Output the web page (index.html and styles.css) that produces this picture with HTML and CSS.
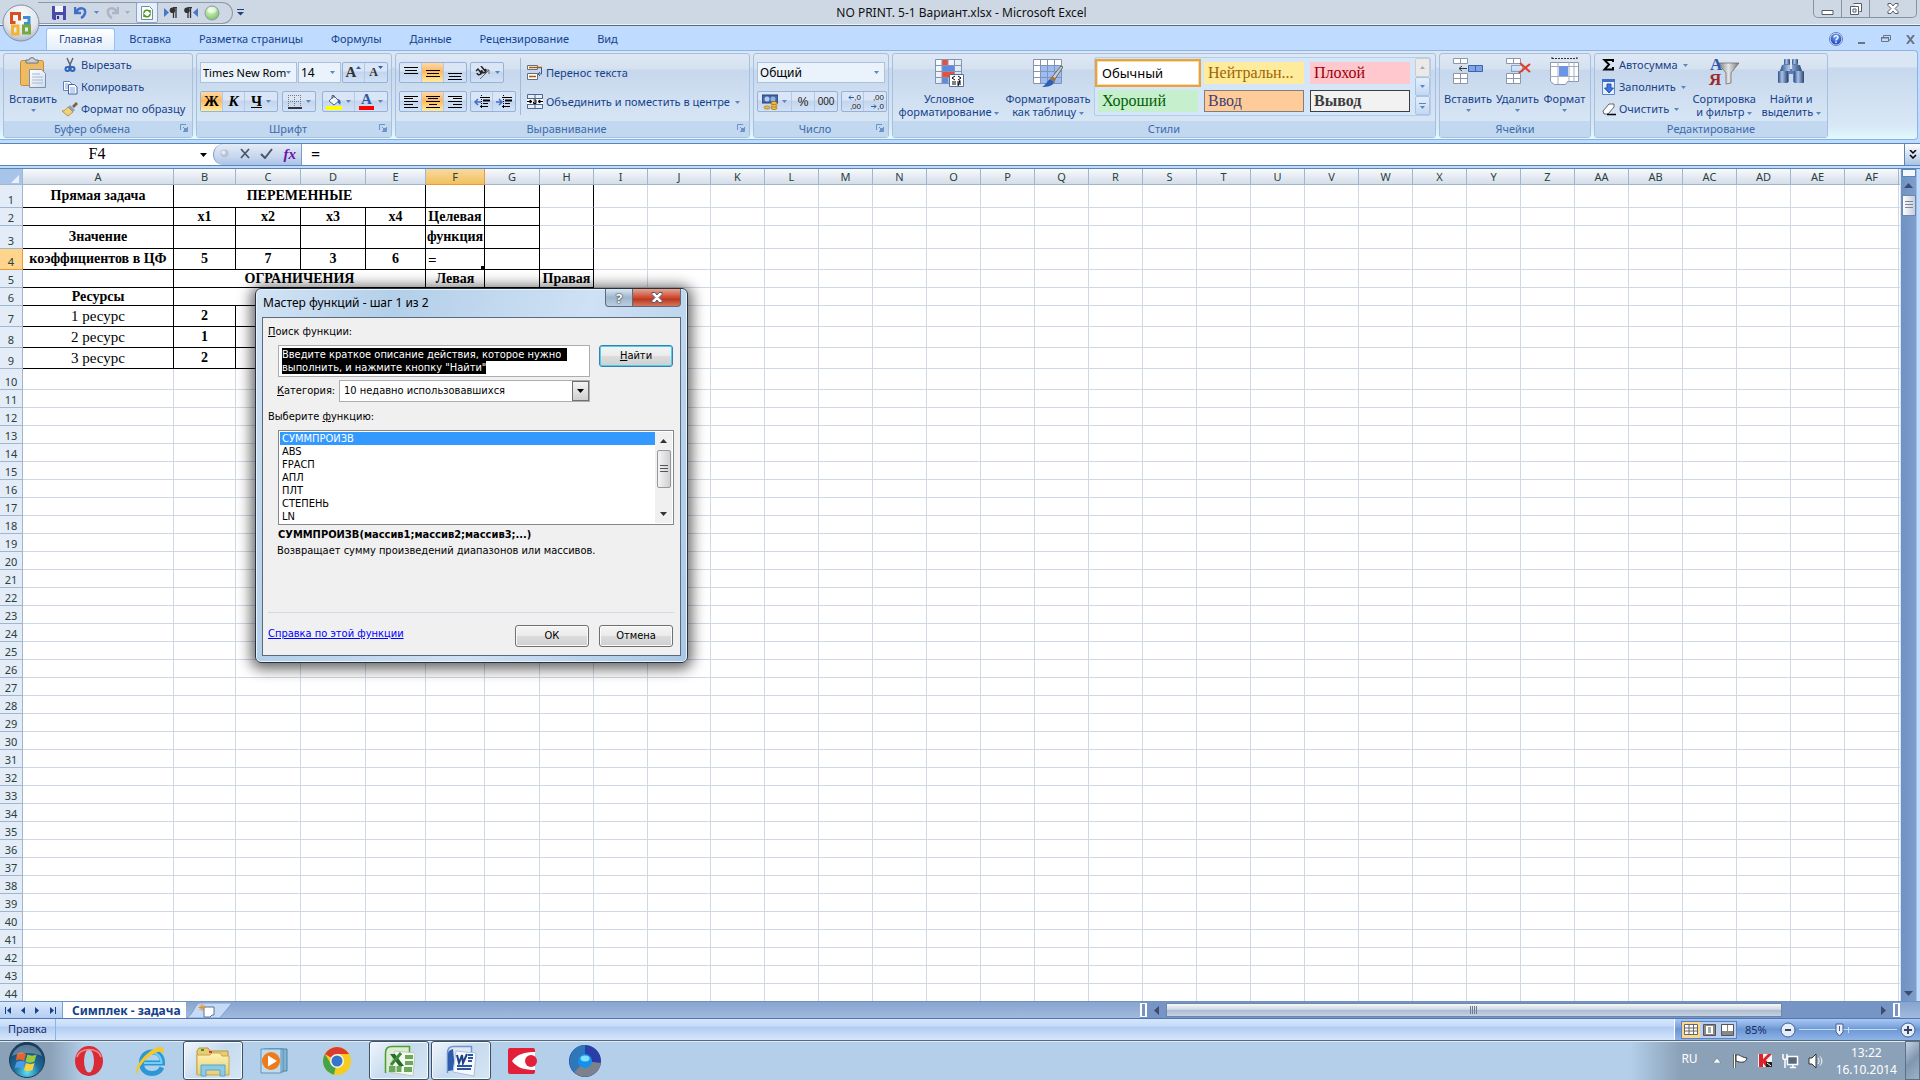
FILE: index.html
```html
<!DOCTYPE html>
<html lang="ru">
<head>
  <meta charset="UTF-8" />
  <meta name="viewport" content="width=device-width, initial-scale=1.0" />
  <title>NO PRINT. 5-1 Вариант.xlsx - Microsoft Excel</title>
  <link rel="stylesheet" href="styles.css">
</head>
<body>
  <svg class="defs" width="0" height="0">
    <defs>
      <linearGradient id="gPaper" x1="0" y1="0" x2="1" y2="1"><stop offset="0" stop-color="#fff"/><stop offset="1" stop-color="#cfdcee"/></linearGradient>
      <linearGradient id="gSteel" x1="0" y1="0" x2="1" y2="0"><stop offset="0" stop-color="#2f4f88"/><stop offset=".4" stop-color="#a9c3e6"/><stop offset="1" stop-color="#2b4473"/></linearGradient>
      <linearGradient id="gFunnel" x1="0" y1="0" x2="1" y2="0"><stop offset="0" stop-color="#777"/><stop offset=".5" stop-color="#e4e4e4"/><stop offset="1" stop-color="#777"/></linearGradient>
      <linearGradient id="gFolder" x1="0" y1="0" x2="0" y2="1"><stop offset="0" stop-color="#fdf3b4"/><stop offset="1" stop-color="#e8cf72"/></linearGradient>
      <radialGradient id="gOrb" cx=".5" cy=".85" r=".8"><stop offset="0" stop-color="#5fe0f5"/><stop offset=".45" stop-color="#1d6d9c"/><stop offset="1" stop-color="#173b5e"/></radialGradient>
      <radialGradient id="gOffice" cx=".5" cy=".3" r=".8"><stop offset="0" stop-color="#fff"/><stop offset=".6" stop-color="#dfe3ec"/><stop offset="1" stop-color="#9aa5bb"/></radialGradient>
      <radialGradient id="gGreen" cx=".4" cy=".3" r=".8"><stop offset="0" stop-color="#eaffdd"/><stop offset="1" stop-color="#6fb850"/></radialGradient>
      <radialGradient id="gHelp" cx=".5" cy=".3" r=".8"><stop offset="0" stop-color="#6fa4f4"/><stop offset="1" stop-color="#1238b4"/></radialGradient>
      <symbol id="launcher" viewBox="0 0 8 8"><path d="M.5 6V.5H6" fill="none" stroke="#6b93c6"/><path d="M3 3l3 3M7.500 3v4.500H3" fill="none" stroke="#6b93c6"/><path d="M4 4h3v3H4z" fill="#6b93c6"/></symbol>
      <symbol id="caret" viewBox="0 0 5 3"><path d="M0 0h5L2.500 3z" fill="#5c86bf"/></symbol>
    </defs>
  </svg>

  <div class="window">
    <header class="titlebar">
      <div class="qat">
        <button aria-label="Сохранить"><svg width="14" height="14"><path d="M0 0h14v14H1.500L0 12.500z" fill="#4a4aa8"/><path d="M3 0h8v6H3z" fill="#f2f4fb"/><path d="M4 9h7v5H4z" fill="#cfd3e8"/><path d="M5 10h2v3H5z" fill="#30307c"/></svg></button>
        <button class="undo" aria-label="Отменить"><svg width="14" height="13"><path d="M1 1v6h6M2 6c3-5 10-5 9 1-.4 2-2 4-4 5" fill="none" stroke="#3f6fc8" stroke-width="2.500"/></svg></button>
        <svg class="caret" width="5" height="3"><use href="#caret"/></svg>
        <button aria-label="Вернуть"><svg width="14" height="13"><path d="M13 1v6H7M12 6C9 1 2 1 3 7c.4 2 2 4 4 5" fill="none" stroke="#aab6c6" stroke-width="2.500"/></svg></button>
        <svg class="caret" width="5" height="3"><path d="M0 0h5L2.500 3z" fill="#a4adb9"/></svg>
        <button class="framed" aria-label="Обновить"><svg width="12" height="14"><path d="M.5.5h8l3 3v10H.5z" fill="#fff" stroke="#7c8aa0"/><path d="M3 7c0-3 4-4 6-1V4M9 8c0 3-4 4-6 1v2" fill="none" stroke="#4a9a22" stroke-width="1.500"/></svg></button>
        <button aria-label="Слева направо"><svg width="14" height="11"><path d="M0 1l5 4.500L0 10z" fill="#4a78c8"/><path d="M9.500 11V1M12 11V1M13 .7H9" stroke="#333" fill="none" stroke-width="1.300"/><circle cx="8.500" cy="3.200" r="2.800" fill="#333"/></svg></button>
        <button aria-label="Справа налево"><svg width="14" height="11"><path d="M14 1L9 5.500l5 4.500z" fill="#4a78c8"/><path d="M4 11V1M6.500 11V1M8 .7H3.500" stroke="#333" fill="none" stroke-width="1.300"/><circle cx="3" cy="3.200" r="2.800" fill="#333"/></svg></button>
        <button aria-label="Запись"><svg width="16" height="16"><circle cx="8" cy="8" r="7" fill="url(#gGreen)" stroke="#8d9bab"/><ellipse cx="8" cy="5" rx="4.500" ry="3" fill="#fff" opacity=".5"/></svg></button>
      </div>
      <button class="qat-more" aria-label="Настройка панели"><svg width="7" height="7"><path d="M0 .5h7" stroke="#23407a"/><path d="M0 3h7L3.500 6.500z" fill="#23407a"/></svg></button>
      <h1>NO PRINT. 5-1 Вариант.xlsx - Microsoft Excel</h1>
      <div class="win-buttons">
        <button aria-label="Свернуть"><svg width="13" height="14"><path d="M1 8.500h11v4H1z" fill="#fff" stroke="#555d6b"/></svg></button>
        <button aria-label="Окно"><svg width="12" height="13"><path d="M3.500 1.500h8v8h-2M.5 4.500h8v8h-8zM3 7h3v3H3z" fill="#fff" stroke="#555d6b"/></svg></button>
        <button class="wide" aria-label="Закрыть"><svg width="12" height="11"><path d="M1 .5h3L6 3 8 .5h3v2L8 5.500l3 3v2H8L6 8l-2 2.500H1v-2l3-3-3-3z" fill="#fff" stroke="#555d6b"/></svg></button>
      </div>
    </header>

    <button class="office" aria-label="Office"><svg width="40" height="40" viewBox="0 0 40 40">
      <circle cx="20" cy="20" r="18" fill="url(#gOffice)" stroke="#8490a6"/>
      <g fill="none" stroke-width="3"><path d="M18.500 17.500v-7h-8v9h4" stroke="#d9501e"/><path d="M22 14.500h6v6h-5" stroke="#3f8fd0"/><path d="M11.500 23h5.500v8h-5.500z" stroke="#f1b52f"/><path d="M22.500 23h6v7h-6z" stroke="#77a93c"/></g>
      <path d="M19 18h3v3h-3z" fill="#fff"/></svg></button>

    <nav class="tabs">
      <a href="#" class="active">Главная</a>
      <a href="#">Вставка</a>
      <a href="#">Разметка страницы</a>
      <a href="#">Формулы</a>
      <a href="#">Данные</a>
      <a href="#">Рецензирование</a>
      <a href="#">Вид</a>
      <div class="doc-buttons">
        <button aria-label="Справка"><svg width="14" height="14"><circle cx="7" cy="7" r="6.500" fill="#fff" stroke="#5b7dbb"/><circle cx="7" cy="7" r="5.500" fill="url(#gHelp)"/><path d="M5 5.500c0-2.500 4-2.500 4 0C9 7 7 6.800 7 8.500M7 9.500v1.500" fill="none" stroke="#fff" stroke-width="1.400"/></svg></button>
        <button aria-label="Свернуть книгу"><svg width="8" height="14"><path d="M0 11h7" stroke="#6b7480" stroke-width="2"/></svg></button>
        <button aria-label="Восстановить книгу"><svg width="10" height="8"><path d="M2.500 3V.5h7V5H8M.5 2.500h7v4h-7z" fill="none" stroke="#6b7480"/><path d="M0 2h8v1.500H0z" fill="#6b7480"/></svg></button>
        <button aria-label="Закрыть книгу"><svg width="9" height="9"><path d="M1 0l7 9M8 0L1 9" stroke="#6b7480" stroke-width="2"/></svg></button>
      </div>
    </nav>

    <div class="ribbon">
      <section class="group clipboard">
        <div class="group-body">
          <button class="big"><svg width="28" height="32"><rect x="1.500" y="3.500" width="23" height="25" rx="2" fill="#eebb62" stroke="#c58c34"/><path d="M7 6V3h3c0-3 6-3 6 0h3v3z" fill="#ccd0d6" stroke="#6d737c"/><path d="M10.500 12.500h12l4 4v14h-16z" fill="url(#gPaper)" stroke="#7d8fae"/><path d="M13 17h8M13 20h11M13 23h11M13 26h11" stroke="#a9b8d2"/></svg><span>Вставить</span><svg class="caret" width="5" height="3"><use href="#caret"/></svg></button>
          <div class="stack">
            <button class="small"><svg width="16" height="16"><path d="M5 1l4 9M11 1L7 10" stroke="#5b6679" stroke-width="1.500"/><g fill="none" stroke="#2f62bb" stroke-width="2"><circle cx="5.500" cy="12" r="2"/><circle cx="10.500" cy="12" r="2"/></g></svg>Вырезать</button>
            <button class="small"><svg width="16" height="16"><path d="M1.500 2.500h6l2 2v7h-8z" fill="#fff" stroke="#5f81bd"/><path d="M6.500 5.500h6l2.500 2.500v7h-8.500z" fill="#fff" stroke="#3967ad"/><path d="M3 5h3M3 7h3M3 9h3M8 9h5M8 11h5M8 13h5" stroke="#86a5d8"/></svg>Копировать</button>
            <button class="small"><svg width="16" height="16"><path d="M10 5l4-4 2 2-4 4z" fill="#7b6248"/><path d="M8 4l5 5-2 2-5-5z" fill="#8fa2c2"/><path d="M6 6l5 5-5 4-6-5c3 0 4-2 6-4z" fill="#f0d27a" stroke="#b89243"/></svg>Формат по образцу</button>
          </div>
        </div>
        <footer>Буфер обмена<svg width="8" height="8"><use href="#launcher"/></svg></footer>
      </section>

      <section class="group font">
        <div class="group-body rows">
          <div class="row">
            <span class="combo"><select class="font-name" aria-label="Шрифт"><option>Times New Rom</option></select><svg class="caret" width="5" height="3"><use href="#caret"/></svg></span>
            <span class="combo"><select class="font-size" aria-label="Размер шрифта"><option>14</option></select><svg class="caret" width="5" height="3"><use href="#caret"/></svg></span>
            <div class="btns push">
              <button class="serif" aria-label="Увеличить размер"><b class="a-big">A</b><svg class="tick" width="5" height="3"><path d="M0 3h5L2.500 0z" fill="#2f5ea8"/></svg></button>
              <button class="serif" aria-label="Уменьшить размер"><b class="a-small">A</b><svg class="tick" width="5" height="3"><path d="M0 0h5L2.500 3z" fill="#2f5ea8"/></svg></button>
            </div>
          </div>
          <div class="row">
            <div class="btns">
              <button class="serif on"><b>Ж</b></button>
              <button class="serif"><b><i>К</i></b></button>
              <button class="serif drop"><b><u>Ч</u></b><svg class="caret" width="5" height="3"><use href="#caret"/></svg></button>
            </div>
            <div class="btns">
              <button class="drop" aria-label="Границы"><svg width="14" height="14"><path d="M.5 0v12M6.500 0v12M12.500 0v12M0 .5h14M0 6.500h14" stroke="#777" stroke-dasharray="1 1"/><path d="M0 13h14" stroke="#000" stroke-width="1.500"/></svg><svg class="caret" width="5" height="3"><use href="#caret"/></svg></button>
            </div>
            <div class="btns push">
              <button class="drop" aria-label="Цвет заливки"><svg width="16" height="16"><path d="M3 7l5-5 5 5-5 4z" fill="#f2f5fa" stroke="#4f6486"/><path d="M6 5V1.500h2V4" fill="none" stroke="#4f6486"/><path d="M12 5c3 1 3 3 2 6-1-2-3-2-2-6z" fill="#2f62bb"/><path d="M0 12h16v4H0z" fill="#ff0"/></svg><svg class="caret" width="5" height="3"><use href="#caret"/></svg></button>
              <button class="serif drop" aria-label="Цвет текста"><b class="a-color">A</b><svg class="caret" width="5" height="3"><use href="#caret"/></svg></button>
            </div>
          </div>
        </div>
        <footer>Шрифт<svg width="8" height="8"><use href="#launcher"/></svg></footer>
      </section>

      <section class="group align">
        <div class="group-body rows">
          <div class="align-buttons">
            <div class="row">
              <div class="btns three">
                <button aria-label="По верхнему краю"><svg width="14" height="16"><path d="M0 2.500h14M1 5.500h12M0 8.500h14" stroke="#000" stroke-width="1"/></svg></button>
                <button class="on" aria-label="По середине"><svg width="14" height="16"><path d="M0 5.500h14M1 8.500h12M0 11.500h14" stroke="#000"/></svg></button>
                <button aria-label="По нижнему краю"><svg width="14" height="16"><path d="M0 8.500h14M1 11.500h12M0 14.500h14" stroke="#000"/></svg></button>
              </div>
              <div class="btns"><button class="drop" aria-label="Ориентация"><svg width="16" height="14"><path d="M5 13L14 4M14 8V4h-4" stroke="#666" fill="none"/><path d="M1 5l2-2 4 5M2 7a2 2 0 1 0 3-2M6 0l5 6M7 4a2 2 0 1 0 3-1" stroke="#222" fill="none" stroke-width="1.500"/></svg><svg class="caret" width="5" height="3"><use href="#caret"/></svg></button></div>
            </div>
            <div class="row">
              <div class="btns three">
                <button aria-label="По левому краю"><svg width="14" height="12"><path d="M0 .5h14M0 2.500h9M0 5.500h14M0 8.500h9M0 11.500h14" stroke="#000"/></svg></button>
                <button class="on" aria-label="По центру"><svg width="14" height="12"><path d="M0 .5h14M2 2.500h10M0 5.500h14M3 8.500h8M0 11.500h14" stroke="#000"/></svg></button>
                <button aria-label="По правому краю"><svg width="14" height="12"><path d="M0 .5h14M5 2.500h9M0 5.500h14M5 8.500h9M0 11.500h14" stroke="#000"/></svg></button>
              </div>
              <div class="btns">
                <button aria-label="Уменьшить отступ"><svg width="16" height="14"><path d="M7.500 0v14" stroke="#000" stroke-dasharray="1 1"/><path d="M6 2.500h10M9 8.500h5M6 11.500h8" stroke="#000"/><path d="M9 5.500h7" stroke="#000" stroke-width="2"/><path d="M7 7H2M4 4L1 7l3 3" stroke="#3f6fc8" fill="none" stroke-width="1.500"/></svg></button>
                <button aria-label="Увеличить отступ"><svg width="16" height="14"><path d="M7.500 0v14" stroke="#000" stroke-dasharray="1 1"/><path d="M6 2.500h10M9 8.500h5M6 11.500h8" stroke="#000"/><path d="M9 5.500h7" stroke="#000" stroke-width="2"/><path d="M0 7h5M3 4l3 3-3 3" stroke="#3f6fc8" fill="none" stroke-width="1.500"/></svg></button>
              </div>
            </div>
          </div>
          <div class="align-text">
            <button class="small"><svg width="16" height="16"><path d="M.5.500h10v4H.5zM.5 8.500h10v6H.5z" fill="#fff" stroke="#6a6f78"/><path d="M2 2.500h13M2 11.500h7" stroke="#a35b1a" stroke-width="1.500"/><path d="M14.500 3v6h-3M13 7l-2 2 2 2" fill="none" stroke="#3c5c8c"/></svg>Перенос текста</button>
            <button class="small"><svg width="16" height="16"><path d="M.5.500h15v14H.5zM.5 4.500h15M.5 10.500h15M8 0v5M8 10v5" fill="#e9eef6" stroke="#4b6796"/><path d="M0 5h16v5H0z" fill="#fff"/><path d="M0 7.500h4M12 7.500h4M3 6l2 1.500L3 9zM13 6l-2 1.500L13 9z" stroke="#000" fill="#000"/><path d="M6.500 6h2.500v3.500H6.500V8H9" fill="none" stroke="#000"/></svg>Объединить и поместить в центре<svg class="caret" width="5" height="3"><use href="#caret"/></svg></button>
          </div>
        </div>
        <footer>Выравнивание<svg width="8" height="8"><use href="#launcher"/></svg></footer>
      </section>

      <section class="group number">
        <div class="group-body rows">
          <div class="row"><span class="combo grow"><select aria-label="Числовой формат"><option>Общий</option></select><svg class="caret" width="5" height="3"><use href="#caret"/></svg></span></div>
          <div class="row">
            <div class="btns">
              <button class="drop" aria-label="Финансовый формат"><svg width="16" height="16"><path d="M0 1h16v8H0z" fill="#4668a8" stroke="#25427c"/><circle cx="5" cy="5" r="2.500" fill="#b5cbee"/><circle cx="11" cy="5" r="2.500" fill="#8fb0e0"/><g fill="#f1bd3c" stroke="#a0701a" stroke-width=".7"><ellipse cx="12" cy="14" rx="3" ry="1.600"/><ellipse cx="12" cy="11.500" rx="3" ry="1.600"/><ellipse cx="12" cy="9" rx="3" ry="1.600"/><ellipse cx="5" cy="13.500" rx="3" ry="1.600"/></g></svg><svg class="caret" width="5" height="3"><use href="#caret"/></svg></button>
              <button class="numeric">%</button>
              <button class="numeric zeros">000</button>
            </div>
            <div class="btns push">
              <button class="decimal" aria-label="Увеличить разрядность"><span><svg width="6" height="5"><path d="M6 2.500H1M3 .5l-2 2 2 2" fill="none" stroke="#2f5ea8"/></svg>,0</span><span>,00</span></button>
              <button class="decimal" aria-label="Уменьшить разрядность"><span>,00</span><span><svg width="6" height="5"><path d="M0 2.500h5M3 .5l2 2-2 2" fill="none" stroke="#2f5ea8"/></svg>,0</span></button>
            </div>
          </div>
        </div>
        <footer>Число<svg width="8" height="8"><use href="#launcher"/></svg></footer>
      </section>

      <section class="group styles">
        <div class="group-body">
          <button class="big cond"><svg width="30" height="30"><path d="M1.500 1.500h26v24h-26z" fill="url(#gPaper)" stroke="#8393b0"/><path d="M8 2h6v5H8z" fill="#e8503a"/><path d="M8 8h12v5H8z" fill="#5d8ae2"/><path d="M8 14h12v5H8z" fill="#e8503a"/><path d="M8 20h6v5H8z" fill="#5d8ae2"/><path d="M8 1v25M14 1v7M14 20v6M20.500 1v25M1 7.500h27M1 13.500h27M1 19.500h27" stroke="#8393b0" fill="none"/><path d="M15.500 16.500h14v12h-14z" fill="#fff" stroke="#55709c"/><path d="M21 18l-3 2 3 2M18 24h4M18 26h4M24 18l3 2-3 2M23 24h4M23 26h4M26 22l-2 6" stroke="#000" fill="none"/></svg><span>Условное<br>форматирование <svg class="caret" width="5" height="3"><use href="#caret"/></svg></span></button>
          <button class="big fmt-table"><svg width="30" height="30"><path d="M.5 1.500h28v24H.5z" fill="#fff" stroke="#8393b0"/><path d="M7 8h21v17H7z" fill="#9cbcf5"/><path d="M7.500 1v25M14.500 1v25M21.500 1v25M0 7.500h29M0 13.500h29M0 19.500h29" stroke="#8393b0"/><path d="M28 8l2 1-8 12-3-2z" fill="#c9ccd2" stroke="#666"/><path d="M19 18l4 3-2 3-4-3z" fill="#a9743a"/><path d="M17 21l4 3c-1 4-6 5-12 5 4-2 5-6 8-8z" fill="#2d5fb6"/></svg><span>Форматировать<br>как таблицу <svg class="caret" width="5" height="3"><use href="#caret"/></svg></span></button>
          <div class="gallery">
            <div class="swatches">
              <button class="normal">Обычный</button>
              <button class="neutral">Нейтральн...</button>
              <button class="bad">Плохой</button>
              <button class="good">Хороший</button>
              <button class="input">Ввод</button>
              <button class="output">Вывод</button>
            </div>
            <div class="gallery-scroll">
              <button class="off" aria-label="Вверх"><svg width="5" height="3"><path d="M0 3h5L2.500 0z" fill="#aaa"/></svg></button>
              <button aria-label="Вниз"><svg width="5" height="3"><use href="#caret"/></svg></button>
              <button aria-label="Все стили"><svg width="7" height="6"><path d="M0 .5h7" stroke="#5c86bf"/><path d="M1 3h5L3.500 6z" fill="#5c86bf"/></svg></button>
            </div>
          </div>
        </div>
        <footer>Стили</footer>
      </section>

      <section class="group cells">
        <div class="group-body">
          <button class="big"><svg width="32" height="32"><path d="M1.500 2.500h14v5h-14zM1.500 17.500h14v10h-14zM8.500 2v6M8.500 17v11M1 22.500h15" fill="#fff" stroke="#8c97ab"/><path d="M16.500 9.500h14v6h-14z" fill="#7ea3e8" stroke="#3f62a8"/><path d="M23.500 9v7" stroke="#3f62a8"/><path d="M8 12.500h7M10 10l-3 2.500 3 2.500" stroke="#333" fill="none"/></svg><span>Вставить</span><svg class="caret" width="5" height="3"><use href="#caret"/></svg></button>
          <button class="big"><svg width="32" height="32"><path d="M4.500 2.500h14v5h-14zM4.500 17.500h14v10h-14zM11.500 2v6M11.500 17v11M4 22.500h15" fill="#fff" stroke="#8c97ab"/><path d="M9.500 9.500h11v6h-11z" fill="none" stroke="#3f62a8" stroke-dasharray="1 1"/><path d="M18 7l10 9M28 8L17 17" stroke="#e03c28" stroke-width="2"/></svg><span>Удалить</span><svg class="caret" width="5" height="3"><use href="#caret"/></svg></button>
          <button class="big"><svg width="32" height="32"><path d="M3 1v3M28 1v3M3 2.500h25" stroke="#333" stroke-dasharray="2 1"/><path d="M1.500 6.500h28v19h-11l-2 3h-11l-4-3z" fill="#fff" stroke="#8c97ab"/><path d="M9 6v22M20 6v20M25 6v20M1 10.500h28M1 20.500h28" stroke="#a4aec0"/><path d="M10 10h9v10h-9z" fill="#6b95e6"/></svg><span>Формат</span><svg class="caret" width="5" height="3"><use href="#caret"/></svg></button>
        </div>
        <footer>Ячейки</footer>
      </section>

      <section class="group editing">
        <div class="group-body">
          <div class="stack">
            <button class="small"><svg width="14" height="16"><path d="M11 5V3H2.500L7 7.500 2.500 12.500H11V10" fill="none" stroke="#000" stroke-width="2"/></svg>Автосумма<svg class="caret" width="5" height="3"><use href="#caret"/></svg></button>
            <button class="small"><svg width="14" height="16"><path d="M.5.500h12v15H.5z" fill="#e8f0fc" stroke="#5b83c4"/><path d="M0 0h13v3H0z" fill="#3d6fc9"/><path d="M5 5h4v4h2.500L7 14 2.500 9H5z" fill="#3d76e0" stroke="#2554a8"/></svg>Заполнить<svg class="caret" width="5" height="3"><use href="#caret"/></svg></button>
            <button class="small"><svg width="14" height="16"><path d="M1 10l6-7h5v3l-6 7H2z" fill="#fff" stroke="#666"/><path d="M5 13.500h9" stroke="#000" stroke-width="1.500"/></svg>Очистить<svg class="caret" width="5" height="3"><use href="#caret"/></svg></button>
          </div>
          <button class="big sort"><svg width="32" height="32"><path d="M10 7h21l-8 10v10l-5 1V17z" fill="url(#gFunnel)" stroke="#666" stroke-width=".7"/><text x="2" y="14" class="glyph-a">А</text><text x="1" y="29" class="glyph-ya">Я</text></svg><span>Сортировка<br>и фильтр <svg class="caret" width="5" height="3"><use href="#caret"/></svg></span></button>
          <button class="big find"><svg width="30" height="32"><path d="M10 4h4v9h2V4h4l6 13v9H17v-8h-4v8H3v-9z" fill="#5b7cb4"/><rect x="8" y="3" width="6" height="5" rx="1" fill="url(#gSteel)"/><rect x="16" y="3" width="6" height="5" rx="1" fill="url(#gSteel)"/><path d="M6 9h8v6H4zM16 9h8l2 6H16z" fill="url(#gSteel)"/><rect x="2" y="15" width="10" height="12" rx="1" fill="url(#gSteel)"/><rect x="18" y="15" width="10" height="12" rx="1" fill="url(#gSteel)"/></svg><span>Найти и<br>выделить <svg class="caret" width="5" height="3"><use href="#caret"/></svg></span></button>
        </div>
        <footer>Редактирование</footer>
      </section>
    </div>

    <div class="formula-bar">
      <label class="name-box"><input type="text" value="F4" aria-label="Имя ячейки"><svg width="7" height="4"><path d="M0 0h7L3.500 4z" fill="#000"/></svg></label>
      <div class="fx">
        <svg width="9" height="9"><circle cx="4.500" cy="4.500" r="4" fill="#b9c3d4"/><circle cx="3.500" cy="3.500" r="2" fill="#e6ebf3"/></svg>
        <button aria-label="Отмена ввода"><svg width="10" height="11"><path d="M1 1l8 9M9 1L1 10" stroke="#4c5468" stroke-width="1.700"/></svg></button>
        <button aria-label="Ввод"><svg width="13" height="11"><path d="M1 6l4 4 7-9" fill="none" stroke="#4c5468" stroke-width="2"/></svg></button>
        <button class="fx-icon"><i>fx</i></button>
      </div>
      <input class="formula" type="text" value="=" aria-label="Строка формул">
      <button class="expand" aria-label="Развернуть"><svg width="8" height="9"><path d="M1 0l3 3 3-3M1 5l3 3 3-3" fill="none" stroke="#000" stroke-width="1.500"/></svg></button>
    </div>

    <main class="sheet">
      <div class="grid-wrap">
        <table class="grid" id="grid">
          <colgroup id="cols"></colgroup>
          <thead><tr id="letters"><th class="corner"><svg width="8" height="8"><path d="M8 0v8H0z" fill="#e9f0fb"/></svg></th></tr></thead>
          <tbody>
            <tr class="h22"><th>1</th><td class="k">Прямая задача</td><td class="k" colspan="4">ПЕРЕМЕННЫЕ</td><td class="k"></td><td class="k"></td><td class="kr"></td></tr>
            <tr class="h18"><th>2</th><td class="k"></td><td class="k">x1</td><td class="k">x2</td><td class="k">x3</td><td class="k">x4</td><td class="k">Целевая</td><td class="k"></td><td class="kr"></td></tr>
            <tr class="h23"><th>3</th><td class="k">Значение</td><td class="k"></td><td class="k"></td><td class="k"></td><td class="k"></td><td class="k">функция</td><td class="k"></td><td class="kr"></td></tr>
            <tr class="h21"><th class="sel">4</th><td class="k">коэффициентов в ЦФ</td><td class="k">5</td><td class="k">7</td><td class="k">3</td><td class="k">6</td><td class="k active-cell">=<i class="handle"></i></td><td class="k"></td><td class="k"></td></tr>
            <tr class="h18"><th>5</th><td class="k"></td><td class="k" colspan="4">ОГРАНИЧЕНИЯ</td><td class="k">Левая</td><td class="k"></td><td class="k">Правая</td></tr>
            <tr class="h18"><th>6</th><td class="k">Ресурсы</td><td class="k" colspan="4"></td><td class="k"></td><td class="k"></td><td class="k"></td></tr>
            <tr class="h21"><th>7</th><td class="k plain">1 ресурс</td><td class="k">2</td><td class="k"></td><td class="k"></td><td class="k"></td><td class="k"></td><td class="k"></td><td class="k"></td></tr>
            <tr class="h21"><th>8</th><td class="k plain">2 ресурс</td><td class="k">1</td><td class="k"></td><td class="k"></td><td class="k"></td><td class="k"></td><td class="k"></td><td class="k"></td></tr>
            <tr class="h21"><th>9</th><td class="k plain">3 ресурс</td><td class="k">2</td><td class="k"></td><td class="k"></td><td class="k"></td><td class="k"></td><td class="k"></td><td class="k"></td></tr>
          </tbody>
        </table>
      </div>
      <div class="vscroll">
        <div class="split"></div>
        <svg width="9" height="5"><path d="M0 5h9L4.500 0z" fill="#3d4c6e"/></svg>
        <div class="thumb"><svg width="8" height="9"><path d="M0 .5h8M0 3.500h8M0 6.500h8" stroke="#7c8698"/></svg></div>
        <svg class="down" width="9" height="5"><path d="M0 0h9L4.500 5z" fill="#3d4c6e"/></svg>
      </div>
    </main>

    <div class="sheet-tabs">
      <div class="sheet-nav">
        <button aria-label="Первый лист"><svg width="7" height="7"><path d="M.5 0v7" stroke="#1c3f8c"/><path d="M6 0v7L2 3.500z" fill="#1c3f8c"/></svg></button>
        <button aria-label="Предыдущий лист"><svg width="5" height="7"><path d="M4 0v7L0 3.500z" fill="#1c3f8c"/></svg></button>
        <button aria-label="Следующий лист"><svg width="5" height="7"><path d="M0 0v7l4-3.500z" fill="#1c3f8c"/></svg></button>
        <button aria-label="Последний лист"><svg width="7" height="7"><path d="M6.500 0v7" stroke="#1c3f8c"/><path d="M1 0v7l4-3.500z" fill="#1c3f8c"/></svg></button>
      </div>
      <a href="#" class="sheet-tab">Симплек - задача</a>
      <button class="new-sheet" aria-label="Вставить лист"><svg width="48" height="15"><path d="M0 15C7 13 9 0 14 0H46L34 15z" fill="#c5daf5" stroke="#7f9fca"/><path d="M18 4h10v8h-2l-2 2h-6z" fill="#fff" stroke="#5b7398"/><path d="M16 1v7M12.500 4.500h7M13.500 2l5 5M18.500 2l-5 5" stroke="#e2902a"/></svg></button>
      <div class="hscroll">
        <i class="hsplit"></i>
        <svg width="5" height="9"><path d="M5 0v9L0 4.500z" fill="#3d4c6e"/></svg>
        <div class="htrack"><div class="hthumb"><svg width="8" height="8"><path d="M.5 0v8M2.500 0v8M4.500 0v8M6.500 0v8" stroke="#6e7b91"/></svg></div></div>
        <svg width="5" height="9"><path d="M0 0v9l5-4.500z" fill="#3d4c6e"/></svg>
        <i class="hsplit"></i>
      </div>
    </div>

    <div class="status">
      <span class="mode">Правка</span>
      <div class="status-right">
        <div class="views">
          <button class="on" aria-label="Обычный"><svg width="14" height="11"><path d="M.5.500h13v10H.5zM.5 4h13M.5 7h13M5 0v11M9.500 0v11" fill="#fff" stroke="#666"/></svg></button>
          <button aria-label="Разметка"><svg width="13" height="12"><path d="M.5.500h12v11H.5z" fill="#888" stroke="#555"/><path d="M3 2h7v8H3z" fill="#fff"/><path d="M5 4h3M5 6h3M5 8h3" stroke="#555"/></svg></button>
          <button aria-label="Страничный"><svg width="13" height="12"><path d="M.5.500h12v11H.5z" fill="#888" stroke="#555"/><path d="M1 1h5v6H1zM7 1h5v6H7z" fill="#fff"/></svg></button>
        </div>
        <span class="percent">85%</span>
        <button class="zoom" aria-label="Уменьшить"><svg width="16" height="16"><circle cx="8" cy="8" r="7" fill="#e4edf9" stroke="#44608f"/><path d="M5 8h6" stroke="#37465f" stroke-width="2"/></svg></button>
        <div class="slider"><svg width="14" height="14"><path d="M13.500 4v6" stroke="#c9dcf6"/><path d="M1 1h7v8l-3.500 4L1 9z" fill="#e9f0fa" stroke="#44608f"/><path d="M4.500 3v5" stroke="#44608f"/></svg></div>
        <button class="zoom" aria-label="Увеличить"><svg width="16" height="16"><circle cx="8" cy="8" r="7" fill="#e4edf9" stroke="#44608f"/><path d="M4 8h8M8 4v8" stroke="#37465f" stroke-width="2"/></svg></button>
      </div>
    </div>

    <!-- function wizard -->
    <div class="dialog" role="dialog" aria-labelledby="dlg-title">
      <div class="dialog-title">
        <span id="dlg-title">Мастер функций - шаг 1 из 2</span>
        <div class="dialog-buttons">
          <button aria-label="Справка">?</button>
          <button class="close" aria-label="Закрыть"><svg width="12" height="11"><path d="M1 .5h3L6 3 8 .5h3v2L8 5.500l3 3v2H8L6 8l-2 2.500H1v-2l3-3-3-3z" fill="#fff" stroke="#555d6b"/></svg></button>
        </div>
      </div>
      <form class="dialog-body" onsubmit="return false;">
        <label for="query"><u>П</u>оиск функции:</label>
        <div class="line search">
          <textarea id="query" rows="2">Введите краткое описание действия, которое нужно выполнить, и нажмите кнопку "Найти"</textarea>
          <button class="dlg-btn default"><span><u>Н</u>айти</span></button>
        </div>
        <div class="line category">
          <label for="category"><u>К</u>атегория:</label>
          <span class="dlg-select"><select id="category"><option>10 недавно использовавшихся</option></select><i><svg width="7" height="4"><path d="M0 0h7L3.500 4z" fill="#000"/></svg></i></span>
        </div>
        <label for="fn">Выберите <u>ф</u>ункцию:</label>
        <div class="listbox">
          <select id="fn" size="7">
            <option selected>СУММПРОИЗВ</option>
            <option>ABS</option>
            <option>FРАСП</option>
            <option>АПЛ</option>
            <option>ПЛТ</option>
            <option>СТЕПЕНЬ</option>
            <option>LN</option>
          </select>
          <div class="list-scroll">
            <svg width="7" height="4"><path d="M0 4h7L3.500 0z" fill="#333"/></svg>
            <div><svg width="8" height="8"><path d="M0 .5h8M0 3.500h8M0 6.500h8" stroke="#555"/></svg></div>
            <svg class="down" width="7" height="4"><path d="M0 0h7L3.500 4z" fill="#333"/></svg>
          </div>
        </div>
        <b class="signature">СУММПРОИЗВ(массив1;массив2;массив3;...)</b>
        <p>Возвращает сумму произведений диапазонов или массивов.</p>
        <div class="line bottom">
          <a href="#">Справка по этой функции</a>
          <button class="dlg-btn">ОК</button>
          <button class="dlg-btn">Отмена</button>
        </div>
      </form>
    </div>
  </div>

  <div class="taskbar">
    <button class="start" aria-label="Пуск"><svg width="38" height="38"><circle cx="19" cy="19" r="17.500" fill="url(#gOrb)" stroke="#1c3c56"/><path d="M9 13c3-2 6-2 9 0l-2 7c-3-2-6-2-8-.5z" fill="#e8622c"/><path d="M19.500 13.500c3 1.500 6 1.500 9 0l-2 7c-3 1.500-6 1.500-9 0z" fill="#9bc93e"/><path d="M7.500 21c3-1.500 6-1.500 8.500 0l-2 7c-3-2-6-2-8.500-.5z" fill="#4c9be8" transform="translate(1 0)"/><path d="M18 22c3 1.500 6 1.500 8.500 0l-2 7c-3 1.500-6 1.500-8.500 0z" fill="#f9d13c"/><path d="M4 15c5-15 25-15 30 0-8-4-22-4-30 0z" fill="#fff" opacity=".3"/></svg></button>
    <div class="tasks">
      <button aria-label="Opera"><svg width="30" height="32"><ellipse cx="15" cy="16" rx="14" ry="15" fill="#d92b35"/><ellipse cx="15" cy="16" rx="5" ry="11.500" fill="#b3cfea"/><path d="M3 12C5 2 25 2 27 12" fill="none" stroke="#f08a8c" stroke-width="1.500"/></svg></button>
      <button aria-label="Internet Explorer"><svg width="32" height="32"><path d="M9 18h18.500c0-7-4-11-10.500-11S6.500 11.500 6.500 18 11 28.500 17 28.500c5 0 8-2 10-6" fill="none" stroke="#2b98d6" stroke-width="5"/><path d="M9 18h17.500c0-6-4-10-9.500-10" fill="none" stroke="#6fd0f4" stroke-width="2"/><path d="M3 30C-3 24 9 9 19 4c7-4 12-2 9 6 0-5-4-4-10-1C9 14 2 24 3 30z" fill="#f5c728"/></svg></button>
      <button class="open" aria-label="Проводник"><svg width="34" height="32"><path d="M1 6l2-3h9l2 3h18v23H1z" fill="#e9cc72" stroke="#b7963f"/><path d="M5 4h3v2H5z" fill="#27a027"/><path d="M13 6h3v2h-3z" fill="#d33"/><path d="M21 8h3v2h-3z" fill="#2a86d8"/><path d="M1 10h13l2-2h8l2 3h7v19H1z" fill="url(#gFolder)" stroke="#c6a64e"/><path d="M5 31V20h24v11h-5v-6H10v6z" fill="#8ccbe8" stroke="#5ba4c8"/></svg></button>
      <button aria-label="Медиа"><svg width="30" height="28"><path d="M8 2h19v22H8z" fill="#7fb4d4" stroke="#4f86aa"/><path d="M4 2h19v23H4z" fill="#a9cfe5" stroke="#4f86aa"/><path d="M1 2h20v24H1z" fill="#c0dcec" stroke="#5f95b5"/><circle cx="11" cy="14" r="9" fill="#ef7a1a"/><path d="M8 8.500l9 5.500-9 5.500z" fill="#fff"/></svg></button>
      <button aria-label="Chrome"><svg width="30" height="30"><circle cx="15" cy="15" r="14" fill="#f7cc1c"/><path d="M15 15L2.900 8A14 14 0 0 1 27.100 8H15z" fill="#dc3b2e"/><path d="M15 15l-3 13.700A14 14 0 0 1 2.900 8L9 18z" fill="#46a34a"/><circle cx="15" cy="15" r="7" fill="#f4f4f4"/><circle cx="15" cy="15" r="5.500" fill="#3576c8"/></svg></button>
      <button class="open" aria-label="Excel"><svg width="32" height="32"><path d="M2.500 28V8c0-4 2-6.500 6-6.500h18V8" fill="#dcecd4" stroke="#4f9e2c" stroke-width="1.500"/><path d="M12 6l20 2-2 23-24-4z" fill="#f4f9f0" stroke="#b9ccb2"/><path d="M22 10h8v4h-8zM22 16h8v4h-8zM21 22h8v5h-8zM6 21h13v6H6z" fill="#6ba65b"/><path d="M19 22v6M13 21v6" stroke="#fff"/><path d="M7 9h5l9 12h-5z" fill="#276b2a"/><path d="M18 8L8 20" stroke="#3b8a36" stroke-width="3"/></svg></button>
      <button class="open" aria-label="Word"><svg width="32" height="32"><path d="M2.500 28V8c0-4 2-6.500 6-6.500h18V8" fill="#dde7f6" stroke="#6f93cf" stroke-width="1.500"/><path d="M3 26V9c0-3 2-4 5-5l2 21z" fill="#2e5cac"/><path d="M11 6l20 2-2 23-21-4z" fill="#f6f9fe" stroke="#b0bfd9"/><path d="M12 10l2 8 3-8 1 8 4-9" fill="none" stroke="#1c4187" stroke-width="2"/><path d="M23 10h5M23 13h5M23 16h4M12 21h15M12 24h14" stroke="#2c559f" stroke-width="2"/></svg></button>
      <button aria-label="ABBYY"><svg width="30" height="28"><rect width="27" height="26" rx="2" y="1" fill="#e2203a"/><path d="M4 14C9 7 17 5 27 5v18C17 23 9 21 4 14z" fill="#fff"/><circle cx="23" cy="14" r="6" fill="#e2203a"/></svg></button>
      <button aria-label="Браузер"><svg width="34" height="34"><circle cx="17" cy="17" r="16" fill="#2a3ea8"/><path d="M17 17L17 1A16 16 0 0 0 6 28z" fill="#2f77b8"/><path d="M17 17L6 28a16 16 0 0 0 27-9z" fill="#7c828c"/><circle cx="17" cy="17" r="7" fill="#1590ee"/><ellipse cx="17" cy="14.500" rx="4.500" ry="3" fill="#7fe0ff"/></svg></button>
    </div>
    <div class="tray">
      <span class="lang">RU</span>
      <svg class="more" width="8" height="5"><path d="M0 5h8L4 0z" fill="#fff" stroke="#4c5a6d" stroke-width=".5"/></svg>
      <svg width="17" height="16"><path d="M2.500 1v14" stroke="#333" stroke-width="3"/><path d="M2.500 1v14" stroke="#fff" stroke-width="1.500"/><path d="M4 2c4-1 4 2 11 3-1 5-6 5-11 3z" fill="#fff" stroke="#333"/></svg>
      <svg width="15" height="15"><path d="M0 1h14v13H0z" fill="#f2f2f2"/><path d="M1 1h4v5l5-5h4L8 7l5 7H8l-3-4v4H1z" fill="#dd2229"/><path d="M8 9h6v5H8z" fill="#222"/><path d="M9 10l4 3" stroke="#fff"/></svg>
      <svg width="17" height="16"><path d="M5.500 3.500h10v8h-10zM8 14.500h6M11 12v2" fill="#56697f" stroke="#fff" stroke-width="1.500"/><path d="M1 1v4c0 2 4 2 4 0V1M3 7v8" fill="none" stroke="#fff" stroke-width="1.500"/></svg>
      <svg width="15" height="16"><path d="M1 5h3l4-4v14l-4-4H1z" fill="#fff" stroke="#333"/><path d="M10 5c1.500 2 1.500 4 0 6M12 3.500c2.500 3 2.500 6 0 9" fill="none" stroke="#fff"/></svg>
      <div class="clock"><time>13:22</time><span>16.10.2014</span></div>
    </div>
    <button class="show-desktop" aria-label="Свернуть все окна"></button>
  </div>
  <script src="script.js"></script>
</body>
</html>
```
FILE: styles.css
```css
* { box-sizing: border-box; }
body {
  margin: 0;
  height: 100vh;
  display: flex;
  flex-direction: column;
  overflow: hidden;
  font: 11px/14px "Noto Sans", sans-serif;
  color: #15428b;
  background: #bfdbff;
}
button, select, input, textarea {
  font: inherit;
  color: inherit;
  margin: 0;
  padding: 0;
  border: 0;
  background: none;
  border-radius: 0;
}
button { white-space: nowrap; }
a { color: inherit; text-decoration: none; }
svg { flex: none; display: block; }
select { appearance: none; outline: none; }
.defs { position: absolute; }
.window {
  position: relative;
  flex: 1;
  min-height: 0;
  display: flex;
  flex-direction: column;
}

/* title bar */
.titlebar {
  height: 26px;
  display: flex;
  align-items: center;
  position: relative;
  background: #ced8e4;
  border-bottom: 1px solid #5c6b7c;
  box-shadow: inset 0 -1px #eef3f8;
}
.qat {
  display: flex;
  align-items: center;
  gap: 6px;
  height: 22px;
  margin: 2px 0 2px 38px;
  padding: 0 12px 0 14px;
  border: 1px solid #8d99a8;
  border-left: 0;
  border-radius: 0 12px 12px 0;
}
.qat button { display: flex; }
.qat .undo { margin-left: 2px; }
.qat .framed {
  width: 22px;
  height: 21px;
  align-items: center;
  justify-content: center;
  border: 1px solid #8ba5c6;
  border-radius: 2px;
  background: #e8f1fb;
}
.qat-more { margin-left: 4px; }
h1 {
  flex: 1;
  margin: 0;
  text-align: center;
  font-size: 12px;
  font-weight: normal;
  color: #111;
  padding-right: 134px;
}
.win-buttons {
  display: flex;
  align-self: flex-start;
  height: 18px;
  margin-right: 3px;
  border: 1px solid #8793a3;
  border-top: 0;
  border-radius: 0 0 5px 5px;
}
.win-buttons button {
  width: 28px;
  display: flex;
  align-items: center;
  justify-content: center;
  border-right: 1px solid #8793a3;
}
.win-buttons .wide { width: 46px; border: 0; }
.office {
  position: absolute;
  left: 1px;
  top: 3px;
  z-index: 2;
}

/* tabs */
.tabs {
  height: 24px;
  display: flex;
  padding: 2px 0 0 44px;
  background: #bfdbff;
}
.tabs a {
  padding: 4px 14px;
  line-height: 14px;
}
.tabs .active {
  border: 1px solid #9bbfe8;
  border-bottom: 0;
  border-radius: 3px 3px 0 0;
  background: linear-gradient(#fff, #e4eefa);
  padding: 3px 12px;
  margin: 0 0 0 2px;
}
.doc-buttons {
  display: flex;
  align-items: center;
  gap: 15px;
  margin: 0 5px 0 auto;
}

/* ribbon */
.ribbon {
  display: flex;
  gap: 3px;
  height: 90px;
  margin: 0 2px 3px 0;
  padding: 2px 3px;
  border: 1px solid #8db2e3;
  border-left: 0;
  border-bottom-color: #8cb0dc;
  border-radius: 0 4px 4px 0;
  background: linear-gradient(#dbe6f4 0, #dbe6f4 16px, #c8d8ed 17px, #d9e8f6 75px, #dffbff 88px);
}
.group {
  display: flex;
  flex-direction: column;
  flex: none;
  height: 85px;
  border: 1px solid #a6c1df;
  border-radius: 3px;
  background: linear-gradient(#dee8f5 0, #d6e1f0 15px, #c7d7ec 16px, #d8e7f6 70px);
}
.group-body { flex: 1; display: flex; min-height: 0; }
.group footer {
  position: relative;
  height: 16px;
  background: #c1d8f0;
  color: #3e6aaa;
  text-align: center;
  padding-right: 12px;
  line-height: 16px;
}
.group footer svg { position: absolute; right: 4px; top: 3px; }
.styles footer, .cells footer, .editing footer { padding: 0; }
.clipboard { width: 190px; }
.font { width: 196px; }
.align { width: 355px; }
.number { width: 136px; }
.styles { width: 544px; }
.cells { width: 152px; }
.editing { width: 234px; }

.big {
  display: flex;
  flex-direction: column;
  align-items: center;
  padding-top: 2px;
  line-height: 13px;
}
.big > svg:first-child { height: 36px; }
.big .caret { margin-top: 4px; }
.big span .caret { display: inline-block; vertical-align: middle; margin: 0; }
.stack { display: flex; flex-direction: column; }
.small {
  display: flex;
  align-items: center;
  gap: 3px;
  height: 22px;
}
.small .caret { margin-left: 2px; }
.clipboard .big { width: 58px; }
.clipboard .big > svg:first-child { margin-top: 1px; height: 35px; }
.cells .group-body { padding: 0 2px; }
.cells .big { flex: 1; }
.cells .big:first-child { flex: 0 0 52px; }
.editing .stack { width: 92px; padding-left: 7px; }
.editing .sort { width: 76px; }
.editing .find { flex: 1; padding-right: 6px; }
.styles .cond { width: 112px; }
.styles .fmt-table { width: 86px; }
.styles .big > svg:first-child { margin-top: 2px; height: 34px; }
.glyph-a { font: bold 17px "Liberation Serif", serif; fill: #2f58a8; }
.glyph-ya { font: bold 17px "Liberation Serif", serif; fill: #9c2c2c; }

.rows { flex-direction: column; gap: 8px; padding: 8px 3px 0; }
.row { display: flex; gap: 3px; height: 21px; }
.push { margin-left: auto; }
.btns {
  display: flex;
  border: 1px solid #93b2dc;
  border-radius: 2px;
  background: linear-gradient(#dae6f5 0, #dae6f5 8px, #c3d5ed 9px, #d2e1f5 100%);
}
.btns button {
  width: 22px;
  display: flex;
  align-items: center;
  justify-content: center;
  border-right: 1px solid #b3c9e8;
}
.btns button:last-child { border-right: 0; }
.btns .drop { width: 32px; gap: 4px; }
.btns .on { background: linear-gradient(#fdd9a8, #fdb95f 45%, #ffec9b); }
.serif { font: 15px/17px "Liberation Serif", serif; color: #000; position: relative; }
.a-big, .a-small { color: #333; }
.a-big { font-size: 15px; }
.a-small { font-size: 12px; }
.tick { align-self: flex-start; margin-top: 3px; }
.a-color { color: #2f58a8; line-height: 13px; border-bottom: 4px solid #f00; padding: 0 2px; }
.btns .numeric { width: 23px; font: 12px/16px "Liberation Sans", sans-serif; color: #222; }
.btns .zeros { width: 22px; font-size: 10px; }
.btns .decimal {
  flex-direction: column;
  align-items: flex-end;
  padding-right: 2px;
  font: 8px/9px "Liberation Sans", sans-serif;
  color: #222;
}
.decimal span { display: flex; align-items: center; }
.combo {
  position: relative;
  display: flex;
  align-items: center;
  height: 21px;
  border: 1px solid #abc1de;
  background: #eaf2fb;
}
.combo .caret { position: absolute; right: 5px; }
.combo select { padding: 0 2px; color: #000; width: 100%; height: 19px; font-size: 12px; }
.combo .font-name { width: 95px; font-size: 11px; }
.combo .font-size { width: 41px; }
.font .row { gap: 1px; }
.font .btns + .btns { margin-left: 3px; }
.font .btns.push { margin-left: auto; }
.grow { flex: 1; }
.number .drop { width: 34px; }
.align .group-body { flex-direction: row; gap: 6px; padding-top: 0; }
.align-buttons {
  display: flex;
  flex-direction: column;
  gap: 8px;
  margin: 4px 0 6px;
  padding: 4px 4px 0 0;
  border-right: 1px solid #9cbbe0;
}
.align-text { display: flex; flex-direction: column; gap: 7px; padding-top: 8px; }
.gallery {
  display: flex;
  margin: 3px 0 5px 3px;
  border: 1px solid #b3cdec;
  border-radius: 2px;
  background: #d4e6f8;
}
.swatches {
  display: grid;
  grid-template-columns: repeat(3, 100px);
  grid-auto-rows: 22px;
  gap: 6px;
  padding: 4px 5px 0 3px;
}
.swatches button { text-align: left; padding-left: 4px; font: 16px/20px "Liberation Serif", serif; }
.swatches .normal { background: #fff; color: #000; font: 13px/20px "Noto Sans", sans-serif; box-shadow: 0 0 0 1px #f7dba8, 0 0 0 3px #e8a33d; }
.swatches .neutral { background: #ffeb9c; color: #9c6500; }
.swatches .bad { background: #ffc7ce; color: #9c0006; }
.swatches .good { background: #c6efce; color: #006100; }
.swatches .input { background: #ffcc99; color: #3f3f76; border: 1px solid #7f7f7f; padding-left: 3px; }
.swatches .output { background: #f2f2f2; color: #3f3f3f; font-weight: bold; border: 1px solid #3f3f3f; padding-left: 3px; }
.gallery-scroll { display: flex; flex-direction: column; width: 15px; }
.gallery-scroll button {
  flex: 1;
  display: flex;
  align-items: center;
  justify-content: center;
  border: 1px solid #a8c3e6;
  border-radius: 2px;
  background: linear-gradient(#e3eefb, #c4d8f2);
}
.gallery-scroll .off { background: #eaeaea; border-color: #ccc; }

/* formula bar */
.formula-bar {
  height: 23px;
  display: flex;
  border: solid #5a86b5;
  border-width: 1px 0;
  background: #fff;
  color: #000;
}
.name-box { width: 213px; display: flex; align-items: center; }
.name-box input { width: 194px; margin-right: 6px; padding-bottom: 1px; text-align: center; font: 16px/20px "Liberation Serif", serif; }
.fx {
  width: 89px;
  display: flex;
  align-items: center;
  justify-content: space-between;
  padding: 0 5px 2px 6px;
  border: 1px solid #7d9cc6;
  border-width: 0 1px 0 1px;
  border-radius: 10px 0 0 10px;
  background: linear-gradient(#e3ecf8, #c7d7ee 60%, #a9c2e6);
}
.fx-icon { font: bold 15px/18px "Liberation Serif", serif; color: #6a14a8; }
.formula { flex: 1; padding: 0 0 2px 9px; font-size: 16px; }
.expand {
  width: 16px;
  display: flex;
  align-items: center;
  justify-content: center;
  border-left: 1px solid #5a86b5;
  background: linear-gradient(#fff, #a9c2e6);
}

/* sheet */
.sheet {
  flex: 1;
  min-height: 0;
  display: flex;
  margin-top: 2px;
  border-top: 1px solid #5a86b5;
}
.grid-wrap { flex: 1; min-width: 0; overflow: hidden; background: #fff; }
.grid { border-collapse: separate; border-spacing: 0; table-layout: fixed; width: 0; }
.grid th, .grid td {
  padding: 0;
  border: solid #d0d7e5;
  border-width: 0 1px 1px 0;
  white-space: nowrap;
  overflow: hidden;
}
.grid thead th {
  height: 16px;
  line-height: 15px;
  font-weight: normal;
  color: #27413e;
  border-color: #9eb6ce;
  background: linear-gradient(#f8fafc, #d5dde9);
}
.grid thead .corner { background: #a9c4e9; }
.corner svg { margin: 4px 3px 0 auto; }
.grid thead .sel, .grid tbody .sel { background: linear-gradient(#f9d99f, #f1c15f); border-color: #f29536; }
.grid tbody th {
  height: 18px;
  vertical-align: bottom;
  line-height: 14px;
  font-weight: normal;
  color: #27413e;
  border-color: #9eb6ce;
  background: #e4ecf7;
}
.grid tbody .sel { background: #ffd58d; }
.grid td {
  text-align: center;
  font: bold 14px/16px "Liberation Serif", serif;
  color: #000;
}
.grid .plain { font-weight: normal; font-size: 15px; }
.grid .k { border-color: #000; }
.grid .kr { border-right-color: #000; }
.grid .h22 th { height: 23px; }
.grid .h23 th { height: 23px; }
.grid .h21 th { height: 21px; }
.grid .active-cell { position: relative; text-align: left; padding-left: 2px; font: 15px/16px "Noto Sans", sans-serif; }
.handle { position: absolute; right: 0; bottom: 0; width: 3px; height: 3px; background: #000; }
.vscroll {
  width: 20px;
  display: flex;
  flex-direction: column;
  align-items: center;
  padding: 0 4px 5px 0;
  border-left: 1px solid #d8e4f4;
  background: linear-gradient(to right, #6f92c4, #7f9ecb 15px, #bfdbff 16px);
}
.split { width: 14px; height: 8px; border: 1px solid #5a86b5; background: #f4f8fd; margin-bottom: 6px; }
.thumb {
  width: 14px;
  height: 21px;
  margin-top: 7px;
  display: flex;
  align-items: center;
  justify-content: center;
  border: 1px solid #7085a8;
  background: linear-gradient(to right, #fdfdfe, #c3cedd);
}
.vscroll .down { margin-top: auto; }

/* sheet tabs */
.sheet-tabs {
  height: 17px;
  display: flex;
  border-top: 1px solid #6e92c4;
  background: linear-gradient(#87a5d0, #a1b9de);
}
.sheet-nav {
  width: 63px;
  display: flex;
  align-items: center;
  justify-content: space-around;
  padding-right: 2px;
  background: linear-gradient(#d9e8fb, #b3cdf2);
  border-right: 1px solid #7f9fca;
}
.sheet-tab { padding: 0 5px 0 9px; background: #fff; font-size: 12px; line-height: 17px; font-weight: bold; }
.hscroll {
  display: flex;
  align-items: center;
  width: 760px;
  margin: 0 20px 0 auto;
  background: #7795c4;
}
.hsplit { width: 7px; height: 14px; border: 2px solid #fff; border-width: 1px 2px; background: #7795c4; }
.hscroll svg { margin: 0 7px; }
.htrack { flex: 1; }
.hthumb {
  width: 87%;
  height: 14px;
  display: flex;
  align-items: center;
  justify-content: center;
  border: 1px solid #7085a8;
  background: linear-gradient(#f5f7f9, #d3dae4 45%, #a9bbcf 50%, #c6d3e2);
}

/* status bar */
.status {
  height: 23px;
  display: flex;
  color: #1a2f6b;
  border-top: 1px solid #4d78b5;
  border-bottom: 1px solid #56687c;
  background: linear-gradient(#d6e6fb, #c6dcf9 7px, #b0ccf4 8px, #d7e6fa);
}
.mode { padding: 3px 8px; border-right: 1px solid #8fb3e2; }
.status-right {
  margin-left: auto;
  display: flex;
  align-items: center;
  gap: 6px;
  padding: 0 7px 0 6px;
  border-left: 1px solid #fff;
  background: linear-gradient(#a9c8f5, #7ba4dc 8px, #6c97d4 10px, #8fb3e6);
}
.views { display: flex; border: 1px solid #5d83bd; }
.views button { width: 18px; height: 16px; display: flex; align-items: center; justify-content: center; background: #b9d0f0; }
.views .on { background: #fcd68a; }
.percent { width: 34px; padding-left: 2px; }
.slider {
  width: 98px;
  padding-left: 36px;
  background: linear-gradient(#c9dcf6, #c9dcf6) center / 100% 1px no-repeat;
}
.status-right .zoom { margin: 0 -3px; }

/* dialog */
.dialog {
  position: absolute;
  left: 255px;
  top: 288px;
  width: 433px;
  padding: 0 6px 6px;
  color: #000;
  font-family: "DejaVu Sans Condensed", "Noto Sans", sans-serif;
  border: 1px solid #26323f;
  border-radius: 6px;
  background: linear-gradient(110deg, #d3e4f5, #b3cfe9 25%, #cfe1f4 60%, #a9c8e6);
  box-shadow: inset 0 0 0 1px #e9f3fc, 0 2px 14px 4px rgba(0,0,0,0.6);
}
.dialog-title { height: 28px; display: flex; justify-content: space-between; }
.dialog-title > span { font: 12px/28px "Noto Sans", sans-serif; padding-left: 1px; }
.dialog-buttons { display: flex; height: 18px; }
.dialog-buttons button {
  width: 28px;
  display: flex;
  align-items: center;
  justify-content: center;
  border: 1px solid #5c6b7e;
  border-top: 0;
  border-radius: 0 0 0 4px;
  background: linear-gradient(#dbe7f3, #9fb6cd 50%, #b9cde0);
  font: bold 13px/16px "Noto Sans", sans-serif;
  color: #fff;
  text-shadow: 0 0 2px #222, 0 0 1px #222;
}
.dialog-buttons .close {
  width: 48px;
  border-left: 0;
  border-radius: 0 0 4px 0;
  background: linear-gradient(#e5a592, #ce4a31 50%, #b83a20 60%, #d9765c);
}
.dialog-body {
  height: 339px;
  display: flex;
  flex-direction: column;
  padding: 7px 6px 8px 5px;
  border: 1px solid #5b6a7c;
  background: #f0f0f0;
}
.dialog-body label { line-height: 14px; }
.line { display: flex; justify-content: space-between; align-items: flex-start; }
.search { margin: 6px 1px 3px 10px; }
.search textarea {
  width: 312px;
  height: 32px;
  padding: 2px 3px;
  line-height: 13px;
  border: 1px solid #abadb3;
  background: #fff;
  resize: none;
  outline: none;
  overflow: hidden;
}
.search textarea::selection { background: #000; color: #fff; }
.dlg-btn {
  width: 74px;
  height: 22px;
  border: 1px solid #707070;
  border-radius: 3px;
  background: linear-gradient(#f4f4f4, #ebebeb 50%, #dcdcdc 51%, #cfcfcf);
  box-shadow: inset 0 0 0 1px #fbfbfb;
}
.dlg-btn.default { border-color: #3c7fb1; box-shadow: inset 0 0 0 1px #48d0f2; }
.category { align-items: center; margin: 0 84px 8px 9px; }
.dlg-select {
  display: flex;
  width: 251px;
  height: 22px;
  border: 1px solid #abadb3;
  background: #fff;
}
.dlg-select select { flex: 1; padding: 0 4px; }
.dlg-select i {
  width: 17px;
  display: flex;
  align-items: center;
  justify-content: center;
  border: 1px solid #707070;
  background: linear-gradient(#f4f4f4, #cfcfcf);
}
.listbox {
  display: flex;
  height: 95px;
  margin: 6px 0 3px 10px;
  padding: 1px;
  border: 1px solid #828790;
  background: #fff;
}
.listbox select { flex: 1; overflow: hidden; height: 91px; }
.listbox option { padding: 0 2px; min-height: 13px; height: 13px; line-height: 13px; color: #000; }
.listbox option:checked { background: #3399ff linear-gradient(#3399ff, #3399ff); color: #fff; }
.list-scroll {
  width: 17px;
  display: flex;
  flex-direction: column;
  align-items: center;
  padding: 7px 0;
  background: #f0f0f0;
}
.list-scroll div {
  width: 14px;
  height: 38px;
  margin-top: 7px;
  display: flex;
  align-items: center;
  justify-content: center;
  border: 1px solid #979797;
  border-radius: 2px;
  background: linear-gradient(to right, #f4f4f4, #d0d0d4);
}
.list-scroll .down { margin-top: auto; }
.signature { margin-left: 10px; }
.dialog-body p { margin: 2px 0 0 9px; }
.bottom { margin-top: auto; padding: 12px 1px 0 0; border-top: 1px solid #d0dae6; gap: 10px; }
.bottom a { margin-right: auto; color: #00f; text-decoration: underline; line-height: 18px; }

/* taskbar */
.taskbar {
  height: 39px;
  display: flex;
  background: linear-gradient(to right, #8ba1b8, #8ba1b8 50px, #b3cfea 85px, #b3cfea calc(100% - 290px), #8ba1b8 calc(100% - 240px));
  box-shadow: inset 0 1px #dcebf8;
}
.start { width: 54px; display: flex; justify-content: center; }
.tasks { display: flex; gap: 2px; margin-left: 5px; }
.tasks button { width: 60px; display: flex; align-items: center; justify-content: center; }
.tasks .open {
  border: 1px solid #3f5064;
  border-radius: 3px;
  background: linear-gradient(135deg, #eef5fb, #c6dbef 50%, #d6e6f4);
  box-shadow: inset 0 0 0 1px #f4f9fd;
}
.tray {
  margin-left: auto;
  display: flex;
  align-items: center;
  gap: 9px;
  color: #fff;
  padding-right: 8px;
}
.lang { font-size: 12px; margin-right: 6px; padding-bottom: 4px; }
.tray .more { margin-right: 2px; }
.clock {
  display: flex;
  flex-direction: column;
  align-items: center;
  margin-left: 4px;
  font-size: 12px;
  line-height: 17px;
}
.show-desktop {
  width: 15px;
  border: 1px solid #5c7088;
  background: linear-gradient(135deg, #c2d2e2, #7f96ae 50%, #9cb2c8);
}
```
FILE: script.js
```js
const widths = [151, 62, 65, 65, 60, 59, 55, 54, 54, 63];
const total = 33;

function letter(i) {
  return i < 26 ? String.fromCharCode(65 + i) : "A" + String.fromCharCode(39 + i);
}

const cols = document.getElementById("cols");
const letters = document.getElementById("letters");
cols.innerHTML = '<col style="width:23px">';
for (let i = 0; i < total; i++) {
  const col = document.createElement("col");
  col.style.width = (widths[i] || 54) + "px";
  cols.appendChild(col);
  const th = document.createElement("th");
  // the last column only peeks out at the edge
  if (i < total - 1) th.textContent = letter(i);
  if (i === 5) th.className = "sel";
  letters.appendChild(th);
}

const body = document.querySelector("#grid tbody");
// pad the filled rows out to the last column
[...body.rows].forEach(row => {
  for (let i = 8; i < total; i++) row.insertCell();
});
for (let n = 10; n <= 44; n++) {
  const row = body.insertRow();
  if (n === 10) row.className = "h21";
  row.innerHTML = `<th>${n}</th>` + "<td></td>".repeat(total);
}

const query = document.getElementById("query");
query.focus();
query.select();
```
